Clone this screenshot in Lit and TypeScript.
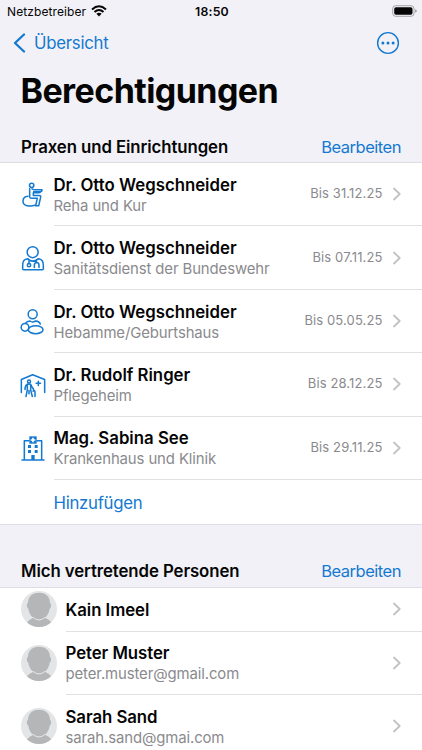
import { LitElement, html, css, svg } from "lit";
import { customElement, property } from "lit/decorators.js";

const practiceIcons: Record<string, { top: number; shape: unknown }> = {
  rehab: {
    top: 31.5,
    shape: svg`<circle cx="65" cy="44.500" r="6.500"/>
      <path d="M59 55v24q0 4 4 4h19l-5 23h9l6-26q1-5-5-5H70v-8M66 55l7 3h23q0 6-5 6H71M71 67h14q6 0 7-3"/>
      <path d="M54 77c-18 1-20 23-5 28 8 2 19 2 26-1"/>`,
  },
  medic: {
    top: 25.5,
    shape: svg`<circle cx="68" cy="50" r="16.5"/>
      <path d="M53 70c-11 1-15 8-15 19v11q0 3 3 3h56q3 0 3-3V89c0-11-4-18-15-19"/>
      <path d="M53 70q15 14 32 0M57 73v11M79 73v8"/>
      <circle cx="57" cy="89" r="5"/>
      <path d="M73 96v-6q0-9 7-9t7 9v6"/>`,
  },
  midwife: {
    top: 27,
    shape: svg`<circle cx="68" cy="49" r="13.5"/>
      <path d="M48 74q3-4 12-5 4 3 8 3t9-3q11 1 14 9"/>
      <circle cx="45" cy="88" r="11.5"/><ellipse cx="77" cy="95" rx="22" ry="12"/>`,
  },
  care: {
    top: 25.5,
    shape: svg`<path d="M34 90V51L68 37l36 14v39"/>
      <circle cx="57" cy="57" r="4.5"/>
      <path d="M52 65q-7 4-7 16M52 65v17l-4 20M62 65v17l5 20M52 66q9-5 14 7l5 8M57 84v10M69 86q6-4 6 3v13"/>
      <path d="M85 56v13M78.500 62.500h13"/>`,
  },
  hospital: {
    top: 30,
    shape: svg`<path d="M36 108h66M43 107V50h14M81 50h14v57"/>
      <path class="solid" d="M58 37h22v22H58z"/>
      <path class="cross" d="M69 41v14M62 48h14"/>
      <path class="solid" d="M54 63h9v9h-9zM74 63h9v9h-9zM54 78h9v9h-9zM74 78h9v9h-9zM64 93h10v15H64z"/>`,
  },
};

@customElement("chevron-mark")
class ChevronMark extends LitElement {
  static styles = css`
    :host { display: block; width: 8px; height: 14px; flex: none; }
    svg { display: block; fill: none; stroke: #c2c2c5; stroke-width: 1.8; stroke-linecap: round; stroke-linejoin: round; }
  `;
  render() {
    return html`<svg width="8" height="14" viewBox="0 0 8 14"><path d="M1 1.500 6.700 7 1 12.500"/></svg>`;
  }
}

@customElement("section-header")
class SectionHeader extends LitElement {
  @property() label = "";
  static styles = css`
    :host { display: flex; justify-content: space-between; align-items: center; padding: 0 21px; height: 31px; box-sizing: border-box; flex: none; }
    .label { font-weight: 600; font-size: 16.8px; letter-spacing: -0.08px; }
    .edit { color: #1479d0; font-size: 16.5px; letter-spacing: -0.48px; }
  `;
  render() {
    return html`<span class="label">${this.label}</span><span class="edit">Bearbeiten</span>`;
  }
}

@customElement("practice-row")
class PracticeRow extends LitElement {
  @property() icon = "";
  @property() name = "";
  @property() kind = "";
  @property() until = "";
  static styles = css`
    :host { display: flex; height: 63.4px; padding-left: 19px; box-sizing: border-box; }
    .icon { width: 28px; height: 28px; flex: none; align-self: center; margin-right: 6.5px; fill: none; stroke: #1479d0; stroke-width: 4.6; stroke-linecap: round; stroke-linejoin: round; }
    .solid { fill: #1479d0; stroke: none; }
    .cross { stroke: #fff; stroke-width: 5; stroke-linecap: butt; }
    .content { flex: 1; display: flex; align-items: center; padding-right: 21px; border-bottom: 1px solid #e1e1e4; }
    .texts { flex: 1; padding-top: 1.4px; }
    .name { font-weight: 600; font-size: 16.8px; line-height: 22px; letter-spacing: 0; }
    .kind { font-size: 14.9px; line-height: 20px; letter-spacing: -0.1px; color: #8a8a8e; }
    .until { font-size: 13px; line-height: 18px; letter-spacing: 0.12px; color: #8a8a8e; margin-right: 10.5px; padding-bottom: 2px; }
  `;
  render() {
    const icon = practiceIcons[this.icon];
    return html`
      <svg class="icon" viewBox="27 ${icon.top} 84 84">${icon.shape}</svg>
      <div class="content">
        <div class="texts"><div class="name">${this.name}</div><div class="kind">${this.kind}</div></div>
        <span class="until">Bis ${this.until}</span>
        <chevron-mark></chevron-mark>
      </div>`;
  }
}

@customElement("person-row")
class PersonRow extends LitElement {
  @property() name = "";
  @property() mail = "";
  static styles = css`
    :host { display: flex; height: 63.5px; padding-left: 21px; box-sizing: border-box; }
    :host([compact]) { height: 44px; }
    .avatar { width: 36px; height: 36px; flex: none; align-self: center; margin: 0 8.5px 1px 0; }
    .content { flex: 1; display: flex; align-items: center; padding-right: 21px; border-bottom: 1px solid #e1e1e4; }
    .texts { flex: 1; padding-top: 1.4px; }
    .name { font-weight: 600; font-size: 16.8px; line-height: 22px; letter-spacing: -0.05px; }
    .mail { font-size: 14.9px; line-height: 20px; letter-spacing: -0.1px; color: #8a8a8e; }
  `;
  render() {
    return html`
      <svg class="avatar" viewBox="0 0 108 108">
        <defs><clipPath id="disc"><circle cx="54" cy="54" r="54"/></clipPath></defs>
        <g clip-path="url(#disc)">
          <rect width="108" height="108" fill="#e4e5e6"/>
          <path d="M18 94q8-10 20-14 16 12 33 0 12 4 20 14v16H18z" fill="#b5b6b8"/>
          <path d="M54 5c22 0 33 14 33 31 5 1 4 15-1 17-3 20-16 33-32 33S25 73 22 53c-5-2-6-16-1-17C21 19 32 5 54 5z" fill="#b5b6b8"/>
          <path d="M36 79q18 16 36 0" fill="none" stroke="#e4e5e6" stroke-width="3"/>
        </g>
      </svg>
      <div class="content">
        <div class="texts"><div class="name">${this.name}</div>${this.mail ? html`<div class="mail">${this.mail}</div>` : ""}</div>
        <chevron-mark></chevron-mark>
      </div>`;
  }
}

@customElement("app-root")
class AppRoot extends LitElement {
  static styles = css`
    :host { display: flex; flex-direction: column; width: 422px; height: 750px; overflow: hidden; background: #f2f1f7; color: #050505; font-family: Inter, "Liberation Sans", sans-serif; }
    .status { display: grid; grid-template-columns: 1fr auto 1fr; align-items: center; height: 22px; padding: 0 5px 0 7px; flex: none; }
    .carrier { display: flex; align-items: center; gap: 5px; font-size: 12px; letter-spacing: 0.1px; }
    .time { font-size: 12.3px; font-weight: 600; letter-spacing: 0.2px; }
    .battery { justify-self: end; display: block; }
    .nav { display: flex; justify-content: space-between; align-items: center; height: 42px; padding: 0 22px 0 13px; flex: none; color: #1479d0; }
    .back { display: flex; align-items: center; gap: 8px; font-size: 16.8px; letter-spacing: -0.25px; }
    .back svg, .more { display: block; }
    h1 { margin: 0; padding: 0 20.5px; height: 67px; font-size: 34px; line-height: 53px; font-weight: 700; letter-spacing: -0.57px; flex: none; }
    .list { background: #fff; border-top: 1px solid #dedde2; flex: none; }
    .practices { height: 362.5px; border-bottom: 1px solid #dedde2; box-sizing: border-box; margin-bottom: 31px; }
    .add { color: #1479d0; font-size: 16.8px; line-height: 46px; padding-left: 53.5px; letter-spacing: -0.3px; }
  `;
  render() {
    return html`
      <div class="status">
        <span class="carrier">Netzbetreiber
          <svg width="16" height="12" viewBox="0 0 16 12" fill="none" stroke="#050505" stroke-width="2">
            <path d="M1 4.400q7-6.300 14 0M3.500 7q4.500-4 9 0"/>
            <path d="M5.400 8.800q2.600-2.200 5.200 0L8 11.500z" fill="#050505" stroke="none"/>
          </svg>
        </span>
        <span class="time">18:50</span>
        <svg class="battery" width="25" height="12" viewBox="0 0 25 12">
          <rect x=".7" y=".7" width="21.300" height="10.600" rx="3" fill="none" stroke="#a5a5a9"/>
          <rect x="2.200" y="2.200" width="18.300" height="7.600" rx="1.800" fill="#050505"/>
          <path d="M23.200 4.200q1.600.6 1.600 1.800t-1.600 1.800z" fill="#97979b"/>
        </svg>
      </div>
      <div class="nav">
        <span class="back">
          <svg width="13" height="20" viewBox="0 0 13 20" fill="none" stroke="currentColor" stroke-width="2.300" stroke-linecap="round" stroke-linejoin="round"><path d="M11 1.500 2 10l9 8.500"/></svg>
          Übersicht
        </span>
        <svg class="more" width="24" height="24" viewBox="0 0 24 24" fill="currentColor">
          <circle cx="12" cy="12" r="10.400" fill="none" stroke="currentColor" stroke-width="1.400"/>
          <circle cx="6.900" cy="12" r="1.500"/><circle cx="12" cy="12" r="1.500"/><circle cx="17.100" cy="12" r="1.500"/>
        </svg>
      </div>
      <h1>Berechtigungen</h1>
      <section-header label="Praxen und Einrichtungen"></section-header>
      <div class="list practices">
        <practice-row icon="rehab" name="Dr. Otto Wegschneider" kind="Reha und Kur" until="31.12.25"></practice-row>
        <practice-row icon="medic" name="Dr. Otto Wegschneider" kind="Sanitätsdienst der Bundeswehr" until="07.11.25"></practice-row>
        <practice-row icon="midwife" name="Dr. Otto Wegschneider" kind="Hebamme/Geburtshaus" until="05.05.25"></practice-row>
        <practice-row icon="care" name="Dr. Rudolf Ringer" kind="Pflegeheim" until="28.12.25"></practice-row>
        <practice-row icon="hospital" name="Mag. Sabina See" kind="Krankenhaus und Klinik" until="29.11.25"></practice-row>
        <div class="add">Hinzufügen</div>
      </div>
      <section-header label="Mich vertretende Personen"></section-header>
      <div class="list">
        <person-row compact name="Kain Imeel"></person-row>
        <person-row name="Peter Muster" mail="peter.muster@gmail.com"></person-row>
        <person-row name="Sarah Sand" mail="sarah.sand@gmai.com"></person-row>
      </div>`;
  }
}
